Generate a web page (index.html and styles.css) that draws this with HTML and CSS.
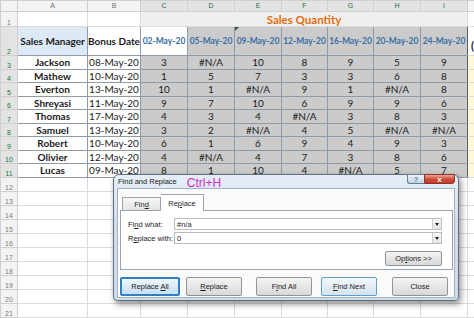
FILE: index.html
```html
<!DOCTYPE html>
<html lang="en">
<head>
  <meta charset="UTF-8">
  <title>Sales Quantity - Find and Replace</title>
  <link rel="stylesheet" href="styles.css">
</head>
<body>
  <div class="page">
    <table class="sheet">
      <colgroup>
        <col class="w-rn"><col class="w-a"><col class="w-b">
        <col class="w-q"><col class="w-q"><col class="w-q"><col class="w-q2">
        <col class="w-q2"><col class="w-q"><col class="w-q"><col class="w-j">
      </colgroup>
      <tr class="r-head">
        <th class="corner"></th><th>A</th><th>B</th>
        <th class="sel">C</th><th class="sel">D</th><th class="sel">E</th><th class="sel">F</th>
        <th class="sel">G</th><th class="sel">H</th><th class="sel">I</th><th></th>
      </tr>
      <tr class="r-1">
        <th class="rn">1</th><td></td><td></td>
        <td class="title" colspan="7">Sales Quantity</td><td></td>
      </tr>
      <tr class="r-2">
        <th class="rn sel">2</th>
        <td class="tb hd-name lbl">Sales Manager</td>
        <td class="tb hd-name">Bonus Date</td>
        <td class="tb hd-date active">02-May-20</td>
        <td class="tb hd-date qty">05-May-20</td>
        <td class="tb hd-date qty flag">09-May-20</td>
        <td class="tb hd-date qty">12-May-20</td>
        <td class="tb hd-date qty">16-May-20</td>
        <td class="tb hd-date qty">20-May-20</td>
        <td class="tb hd-date qty edge">24-May-20</td>
        <td class="paren">(</td>
      </tr>
      <tr class="r-d"><th class="rn sel">3</th><td class="tb name">Jackson</td><td class="tb">08-May-20</td><td class="tb qty">3</td><td class="tb qty">#N/A</td><td class="tb qty">10</td><td class="tb qty">8</td><td class="tb qty">9</td><td class="tb qty">5</td><td class="tb qty edge">9</td><td class="note"></td></tr>
      <tr class="r-d"><th class="rn sel">4</th><td class="tb name">Mathew</td><td class="tb">10-May-20</td><td class="tb qty">1</td><td class="tb qty">5</td><td class="tb qty">7</td><td class="tb qty">3</td><td class="tb qty">3</td><td class="tb qty">6</td><td class="tb qty edge">8</td><td class="note"></td></tr>
      <tr class="r-d"><th class="rn sel">5</th><td class="tb name">Everton</td><td class="tb">13-May-20</td><td class="tb qty">10</td><td class="tb qty">1</td><td class="tb qty">#N/A</td><td class="tb qty">9</td><td class="tb qty">1</td><td class="tb qty">#N/A</td><td class="tb qty edge">8</td><td class="note"></td></tr>
      <tr class="r-d"><th class="rn sel">6</th><td class="tb name">Shreyasi</td><td class="tb">11-May-20</td><td class="tb qty">9</td><td class="tb qty">7</td><td class="tb qty">10</td><td class="tb qty">6</td><td class="tb qty">9</td><td class="tb qty">9</td><td class="tb qty edge">6</td><td class="note"></td></tr>
      <tr class="r-d"><th class="rn sel">7</th><td class="tb name">Thomas</td><td class="tb">17-May-20</td><td class="tb qty">4</td><td class="tb qty">3</td><td class="tb qty">4</td><td class="tb qty">#N/A</td><td class="tb qty">3</td><td class="tb qty">8</td><td class="tb qty edge">3</td><td class="note"></td></tr>
      <tr class="r-d"><th class="rn sel">8</th><td class="tb name">Samuel</td><td class="tb">13-May-20</td><td class="tb qty">3</td><td class="tb qty">2</td><td class="tb qty">#N/A</td><td class="tb qty">4</td><td class="tb qty">5</td><td class="tb qty">#N/A</td><td class="tb qty edge">#N/A</td><td class="note"></td></tr>
      <tr class="r-d"><th class="rn sel">9</th><td class="tb name">Robert</td><td class="tb">10-May-20</td><td class="tb qty">6</td><td class="tb qty">1</td><td class="tb qty">6</td><td class="tb qty">9</td><td class="tb qty">4</td><td class="tb qty">9</td><td class="tb qty edge">3</td><td class="note"></td></tr>
      <tr class="r-d"><th class="rn sel">10</th><td class="tb name">Olivier</td><td class="tb">12-May-20</td><td class="tb qty">4</td><td class="tb qty">#N/A</td><td class="tb qty">4</td><td class="tb qty">7</td><td class="tb qty">3</td><td class="tb qty">8</td><td class="tb qty edge">6</td><td class="note"></td></tr>
      <tr class="r-d"><th class="rn sel">11</th><td class="tb name">Lucas</td><td class="tb">09-May-20</td><td class="tb qty">8</td><td class="tb qty">1</td><td class="tb qty">10</td><td class="tb qty">4</td><td class="tb qty">#N/A</td><td class="tb qty">5</td><td class="tb qty edge">7</td><td class="note"></td></tr>
      <tr class="r-e"><th class="rn">12</th><td></td><td></td><td></td><td></td><td></td><td></td><td></td><td></td><td></td><td></td></tr>
      <tr class="r-e"><th class="rn">13</th><td></td><td></td><td></td><td></td><td></td><td></td><td></td><td></td><td></td><td></td></tr>
      <tr class="r-e"><th class="rn">14</th><td></td><td></td><td></td><td></td><td></td><td></td><td></td><td></td><td></td><td></td></tr>
      <tr class="r-e"><th class="rn">15</th><td></td><td></td><td></td><td></td><td></td><td></td><td></td><td></td><td></td><td></td></tr>
      <tr class="r-e"><th class="rn">16</th><td></td><td></td><td></td><td></td><td></td><td></td><td></td><td></td><td></td><td></td></tr>
      <tr class="r-e"><th class="rn">17</th><td></td><td></td><td></td><td></td><td></td><td></td><td></td><td></td><td></td><td></td></tr>
      <tr class="r-e"><th class="rn">18</th><td></td><td></td><td></td><td></td><td></td><td></td><td></td><td></td><td></td><td></td></tr>
      <tr class="r-e"><th class="rn">19</th><td></td><td></td><td></td><td></td><td></td><td></td><td></td><td></td><td></td><td></td></tr>
      <tr class="r-e"><th class="rn">20</th><td></td><td></td><td></td><td></td><td></td><td></td><td></td><td></td><td></td><td></td></tr>
      <tr class="r-e"><th class="rn">21</th><td></td><td></td><td></td><td></td><td></td><td></td><td></td><td></td><td></td><td></td></tr>
    </table>

    <div class="dlg">
      <div class="dlg-title">
        <span class="dlg-name">Find and Replace</span>
        <span class="hotkey">Ctrl+H</span>
      </div>
      <div class="caption-btns">
        <span class="cap-help">?</span>
        <span class="cap-close">x</span>
      </div>
      <div class="dlg-client">
        <div class="tabs">
          <span class="tab">Fin<u>d</u></span>
          <span class="tab active">Re<u>p</u>lace</span>
        </div>
        <div class="panel">
          <div class="field">
            <label>Fi<u>n</u>d what:</label>
            <div class="combo"><span>#n/a</span><i class="drop"></i></div>
          </div>
          <div class="field">
            <label>R<u>e</u>place with:</label>
            <div class="combo"><span>0</span><i class="drop"></i></div>
          </div>
          <div class="opts">
            <button class="btn btn-opts">Op<u>t</u>ions &gt;&gt;</button>
          </div>
        </div>
        <div class="actions">
          <button class="btn btn-all">Replace <u>A</u>ll</button>
          <button class="btn btn-replace"><u>R</u>eplace</button>
          <button class="btn btn-findall">F<u>i</u>nd All</button>
          <button class="btn btn-next"><u>F</u>ind Next</button>
          <button class="btn btn-close">Close</button>
        </div>
      </div>
    </div>
  </div>
</body>
</html>
```

FILE: styles.css
```css
* {
  box-sizing: border-box;
}

body {
  margin: 0;
  background: #fff;
  font-family: Lato, 'Liberation Sans', sans-serif;
  color: #1b1b1b;
}

.page {
  position: relative;
  width: 474px;
  height: 318px;
  overflow: hidden;
}

/* ---- spreadsheet ---- */

.sheet {
  border-collapse: collapse;
  table-layout: fixed;
  width: 527px;
}

.w-rn { width: 17px; }
.w-a { width: 70px; }
.w-b { width: 53px; }
.w-q { width: 47px; }
.w-q2 { width: 46px; }
.w-j { width: 60px; }

.sheet td,
.sheet th {
  border: 1px solid #dcdcdc;
  padding: 0;
  text-align: center;
  white-space: nowrap;
  overflow: hidden;
  font-size: 10px;
  font-weight: normal;
}

.r-head { height: 11px; }
.r-1 { height: 15px; }
.r-2 { height: 29px; }
.r-d { height: 13.5px; }
.r-e { height: 14px; }

.sheet .r-head th {
  background: #f3f3f3;
  color: #6f6f6f;
  font-family: 'Liberation Sans', sans-serif;
  font-size: 7px;
  line-height: 10px;
  border-color: #d0d0d0;
}

.sheet .r-head th.sel {
  background: #e3e3e3;
  color: #217346;
}

.sheet th.rn {
  background: #f3f3f3;
  color: #7b7b7b;
  font-family: 'Liberation Sans', sans-serif;
  font-size: 7px;
  vertical-align: bottom;
  border-color: #d0d0d0;
}

.sheet th.rn.sel {
  background: #e3e3e3;
  color: #217346;
}

.sheet .title {
  background: #efefef;
  color: #e36c0a;
  font-weight: bold;
  font-size: 11.5px;
  border-left: 1px solid #6d9f8c;
}

.sheet td.tb {
  border-color: #8e9ba6;
  line-height: 12px;
}

.sheet .hd-name {
  font-weight: bold;
  font-size: 10px;
}

.sheet .lbl {
  background: #dde9f5;
}

.sheet .hd-date {
  color: #3b6fa3;
  font-weight: bold;
  font-size: 8.5px;
}

.sheet .active {
  background: #fff;
}

.sheet .qty {
  background: #cbcbcb;
}

.flag {
  position: relative;
}

.flag::before {
  content: "";
  position: absolute;
  left: 0;
  top: 0;
  border-top: 4px solid #3d4a3f;
  border-right: 4px solid transparent;
}

.sheet td.edge {
  border-right: 1px solid #55606b;
}

.sheet .name {
  font-weight: bold;
}

.sheet .note {
  background: #fff8d9;
}

.sheet .paren {
  text-align: left;
  vertical-align: bottom;
  font-weight: bold;
  font-size: 11px;
  padding-left: 3px;
  padding-bottom: 3px;
}

/* ---- find and replace dialog ---- */

.dlg {
  position: absolute;
  left: 113px;
  top: 174px;
  width: 346px;
  height: 127px;
  border: 1px solid #5f6f82;
  border-radius: 6px 6px 4px 4px;
  background: linear-gradient(#e6eef7, #d3dfec 40%, #cfdbe8);
  box-shadow: 2px 3px 6px rgba(0, 0, 0, 0.45);
  font-family: 'Liberation Sans', sans-serif;
  font-size: 7.5px;
  color: #1e1e1e;
}

.dlg-title {
  height: 13px;
  display: flex;
  align-items: center;
  padding-left: 4px;
}

.dlg-name {
  font-size: 7.5px;
  color: #222;
}

.hotkey {
  margin-left: 10px;
  font-size: 12px;
  color: #cc2fc9;
  padding-top: 2px;
}

.caption-btns {
  position: absolute;
  right: 3px;
  top: -1px;
  display: flex;
}

.cap-help,
.cap-close {
  height: 10px;
  display: flex;
  align-items: center;
  justify-content: center;
  border: 1px solid #6a7d93;
  font-weight: bold;
  font-size: 8px;
}

.cap-help {
  width: 17px;
  border-radius: 0 0 0 3px;
  border-right: none;
  background: linear-gradient(#eef3f9, #c6d4e4);
  color: #6f86a0;
}

.cap-close {
  width: 31px;
  border-radius: 0 0 3px 0;
  background: linear-gradient(#eba497, #cf4a37 55%, #c03b28);
  color: #fff;
  border-color: #8a3326;
}

.dlg-client {
  margin: 0 3px 0 3px;
  height: 110px;
  background: #fbfbfb;
  border: 1px solid #a3b1c0;
  padding: 5px 1px 0 2px;
}

.tabs {
  display: flex;
  align-items: flex-end;
  height: 16px;
  padding-left: 2px;
}

.tab {
  height: 13px;
  width: 39px;
  display: flex;
  align-items: center;
  justify-content: center;
  border: 1px solid #9aa5b1;
  border-bottom: none;
  background: linear-gradient(#f7f7f7, #e4e4e4);
}

.tab.active {
  width: 43px;
  height: 17px;
  margin-bottom: -1px;
  background: #fff;
  border-left: none;
  position: relative;
}

.panel {
  height: 60px;
  background: #fff;
  border: 1px solid #98a4b0;
  padding: 7px 10px 0 7px;
}

.field {
  display: flex;
  align-items: center;
  height: 12px;
  margin-bottom: 2px;
}

.field label {
  width: 46px;
  flex: none;
}

.combo {
  flex: 1;
  height: 12px;
  border: 1px solid #b5bcc4;
  display: flex;
  align-items: center;
  justify-content: space-between;
  padding-left: 2px;
  background: #fff;
}

.drop {
  width: 9px;
  height: 10px;
  border-left: 1px solid #c7cdd3;
  background: linear-gradient(#f8f8f8, #e6e6e6);
  position: relative;
}

.drop::after {
  content: "";
  position: absolute;
  left: 2px;
  top: 4px;
  border-top: 3px solid #222;
  border-left: 2.5px solid transparent;
  border-right: 2.5px solid transparent;
}

.opts {
  display: flex;
  justify-content: flex-end;
  margin-top: 7px;
}

.btn {
  height: 15px;
  width: 56px;
  padding: 0;
  border: 1px solid #8f9499;
  border-radius: 2px;
  background: linear-gradient(#f4f4f4, #e6e6e6 50%, #d8d8d8);
  font-family: 'Liberation Sans', sans-serif;
  font-size: 7.5px;
  color: #1e1e1e;
}

.btn-opts {
  width: 57px;
}

.actions {
  display: flex;
  align-items: center;
  margin-top: 7px;
}

.actions .btn {
  height: 19px;
}

.btn-all {
  width: 60px;
  border: 2px solid #2f7fc1;
  background: linear-gradient(#eef6fc, #d9eaf7 50%, #c9def0);
}

.btn-replace { margin-left: 6px; }
.btn-findall { margin-left: 14px; }
.btn-next {
  margin-left: 9px;
  border-color: #5f9fcd;
  background: linear-gradient(#f4f8fb, #e3edf5 50%, #d6e3ee);
}
.btn-close { margin-left: 15px; }
```
